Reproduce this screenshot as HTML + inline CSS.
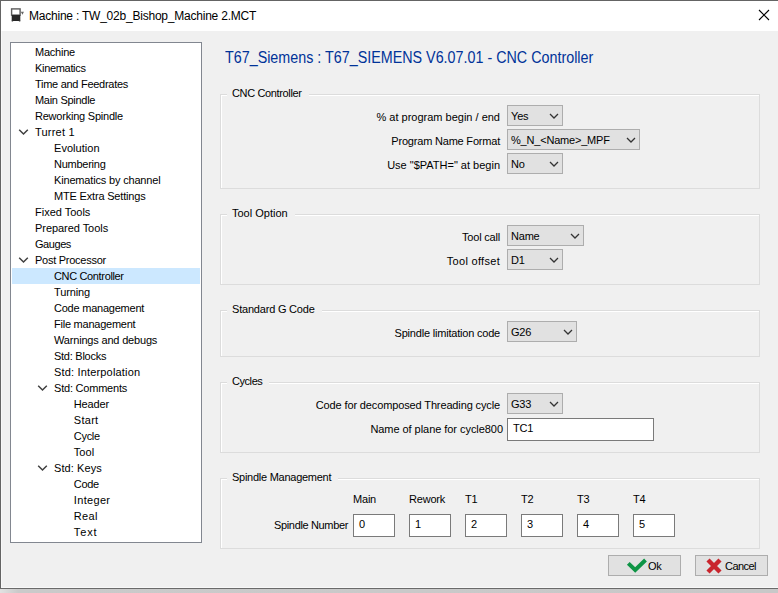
<!DOCTYPE html>
<html><head><meta charset="utf-8">
<style>
html,body{margin:0;padding:0;width:778px;height:593px;overflow:hidden;background:#f0f0f0;}
*{box-sizing:border-box;}
body{font-family:"Liberation Sans",sans-serif;font-size:11px;color:#000;position:relative;letter-spacing:-0.2px;}
div,svg{position:absolute;}
.t{white-space:nowrap;line-height:16px;height:16px;}
.grp{left:220px;width:540px;border:1px solid #dcdcdc;box-shadow:inset 1px 1px 0 #fff;}
.gl{background:#f0f0f0;white-space:nowrap;line-height:14px;height:14px;padding:0 7px 0 5px;}
.cb{left:507px;height:21px;background:#e1e1e1;border:1px solid #adadad;line-height:21px;padding-left:3px;white-space:nowrap;}
.tb{height:23px;width:42px;background:#fff;border:1px solid #7a7a7a;line-height:19px;padding-left:5px;white-space:nowrap;}
.lbl{white-space:nowrap;line-height:16px;height:16px;text-align:right;}
.btn{top:555px;width:73px;height:21px;background:#e1e1e1;border:1px solid #adadad;}
</style></head><body>
<!-- window frame -->
<div style="left:0;top:0;width:778px;height:31px;background:#fff"></div>
<div style="left:0;top:0;width:778px;height:1px;background:#646464"></div>
<div style="left:0;top:0;width:1px;height:589px;background:#646464"></div>
<div style="left:1px;top:31px;width:1px;height:557px;background:#f8f8f8"></div>
<div style="left:1px;top:587px;width:777px;height:1px;background:#f8f8f8"></div>
<div style="left:0;top:588px;width:778px;height:1px;background:#6a6a6a"></div>
<div style="left:0;top:589px;width:778px;height:4px;background:linear-gradient(to right,#e2e2e2,#cacaca 18px,#c8c8c8)"></div>

<!-- title bar -->
<svg style="left:8px;top:5px" width="20" height="20" viewBox="0 0 20 20">
  <rect x="3.6" y="3.9" width="8.5" height="6.2" fill="#fff" stroke="#5c5c5c" stroke-width="1.4"/>
  <rect x="3.7" y="10" width="8.6" height="6" fill="#262626"/>
  <rect x="3.7" y="15.5" width="1.4" height="1" fill="#444"/>
  <rect x="10.9" y="15.5" width="1.4" height="1" fill="#444"/>
  <path d="M12.8 6.8 L15.9 6.8 L14.5 9.8 Z" fill="#666"/>
</svg>
<div class="t" style="left:29px;top:8px;font-size:12px;letter-spacing:-0.22px">Machine : TW_02b_Bishop_Machine 2.MCT</div>
<svg style="left:758px;top:9px" width="14" height="13" viewBox="0 0 14 13">
  <path d="M1 1 L11 11 M11 1 L1 11" stroke="#000" stroke-width="1.1" fill="none"/>
</svg>

<!-- tree -->
<div style="left:10px;top:42px;width:192px;height:501px;background:#fff;border:1px solid #828790"></div>
<div style="left:12px;top:268px;width:188px;height:16px;background:#cce8ff"></div>
<div class="t" style="left:35px;top:44px;letter-spacing:-0.23px">Machine</div>
<div class="t" style="left:35px;top:60px;letter-spacing:-0.32px">Kinematics</div>
<div class="t" style="left:35px;top:76px;letter-spacing:-0.28px">Time and Feedrates</div>
<div class="t" style="left:35px;top:92px;letter-spacing:-0.29px">Main Spindle</div>
<div class="t" style="left:35px;top:108px;letter-spacing:-0.22px">Reworking Spindle</div>
<div class="t" style="left:35px;top:124px;letter-spacing:0.21px">Turret 1</div>
<svg style="left:18px;top:128px" width="11" height="8" viewBox="0 0 11 8"><path d="M1.2 1.8 L5.5 6 L9.8 1.8" stroke="#404040" stroke-width="1.5" fill="none"/></svg>
<div class="t" style="left:54px;top:140px;letter-spacing:0.04px">Evolution</div>
<div class="t" style="left:54px;top:156px;letter-spacing:-0.25px">Numbering</div>
<div class="t" style="left:54px;top:172px;letter-spacing:-0.17px">Kinematics by channel</div>
<div class="t" style="left:54px;top:188px;letter-spacing:-0.18px">MTE Extra Settings</div>
<div class="t" style="left:35px;top:204px;letter-spacing:-0.01px">Fixed Tools</div>
<div class="t" style="left:35px;top:220px;letter-spacing:-0.05px">Prepared Tools</div>
<div class="t" style="left:35px;top:236px;letter-spacing:-0.44px">Gauges</div>
<div class="t" style="left:35px;top:252px;letter-spacing:-0.26px">Post Processor</div>
<svg style="left:18px;top:256px" width="11" height="8" viewBox="0 0 11 8"><path d="M1.2 1.8 L5.5 6 L9.8 1.8" stroke="#404040" stroke-width="1.5" fill="none"/></svg>
<div class="t" style="left:54px;top:268px;letter-spacing:-0.35px">CNC Controller</div>
<div class="t" style="left:54px;top:284px;letter-spacing:-0.13px">Turning</div>
<div class="t" style="left:54px;top:300px;letter-spacing:-0.23px">Code management</div>
<div class="t" style="left:54px;top:316px;letter-spacing:-0.24px">File management</div>
<div class="t" style="left:54px;top:332px;letter-spacing:-0.18px">Warnings and debugs</div>
<div class="t" style="left:54px;top:348px;letter-spacing:-0.26px">Std: Blocks</div>
<div class="t" style="left:54px;top:364px;letter-spacing:0.17px">Std: Interpolation</div>
<div class="t" style="left:54px;top:380px;letter-spacing:-0.21px">Std: Comments</div>
<svg style="left:37px;top:384px" width="11" height="8" viewBox="0 0 11 8"><path d="M1.2 1.8 L5.5 6 L9.8 1.8" stroke="#404040" stroke-width="1.5" fill="none"/></svg>
<div class="t" style="left:73.8px;top:396px;letter-spacing:-0.16px">Header</div>
<div class="t" style="left:73.8px;top:412px;letter-spacing:0.28px">Start</div>
<div class="t" style="left:73.8px;top:428px;letter-spacing:-0.30px">Cycle</div>
<div class="t" style="left:73.8px;top:444px;letter-spacing:0.07px">Tool</div>
<div class="t" style="left:54px;top:460px;letter-spacing:0.08px">Std: Keys</div>
<svg style="left:37px;top:464px" width="11" height="8" viewBox="0 0 11 8"><path d="M1.2 1.8 L5.5 6 L9.8 1.8" stroke="#404040" stroke-width="1.5" fill="none"/></svg>
<div class="t" style="left:73.8px;top:476px;letter-spacing:-0.33px">Code</div>
<div class="t" style="left:73.8px;top:492px;letter-spacing:0.33px">Integer</div>
<div class="t" style="left:73.8px;top:508px;letter-spacing:0.30px">Real</div>
<div class="t" style="left:73.8px;top:524px;letter-spacing:0.87px">Text</div>

<!-- heading -->
<div class="t" style="left:225px;top:48px;font-size:16px;height:20px;line-height:20px;color:#003399;letter-spacing:0;transform-origin:0 0;transform:scaleX(0.895)">T67_Siemens : T67_SIEMENS V6.07.01 - CNC Controller</div>

<!-- group 1 -->
<div class="grp" style="top:94px;height:95px"></div>
<div class="gl" style="left:227px;top:86px;letter-spacing:-0.36px">CNC Controller</div>
<div class="lbl" style="right:278px;top:109px;letter-spacing:0">% at program begin / end</div>
<div class="cb" style="top:105px;width:56px">Yes</div>
<svg style="left:549px;top:112px" width="11" height="8" viewBox="0 0 11 8"><path d="M1 2 L5 6 L9 2" stroke="#333" stroke-width="1.25" fill="none"/></svg>
<div class="lbl" style="right:278px;top:133px">Program Name Format</div>
<div class="cb" style="top:129px;width:133px">%_N_&lt;Name&gt;_MPF</div>
<svg style="left:626px;top:136px" width="11" height="8" viewBox="0 0 11 8"><path d="M1 2 L5 6 L9 2" stroke="#333" stroke-width="1.25" fill="none"/></svg>
<div class="lbl" style="right:278px;top:157px;letter-spacing:0">Use "$PATH=" at begin</div>
<div class="cb" style="top:153px;width:56px">No</div>
<svg style="left:549px;top:160px" width="11" height="8" viewBox="0 0 11 8"><path d="M1 2 L5 6 L9 2" stroke="#333" stroke-width="1.25" fill="none"/></svg>

<!-- group 2 -->
<div class="grp" style="top:214px;height:71px"></div>
<div class="gl" style="left:227px;top:206px;letter-spacing:0px">Tool Option</div>
<div class="lbl" style="right:278px;top:229px">Tool call</div>
<div class="cb" style="top:225px;width:77px">Name</div>
<svg style="left:570px;top:232px" width="11" height="8" viewBox="0 0 11 8"><path d="M1 2 L5 6 L9 2" stroke="#333" stroke-width="1.25" fill="none"/></svg>
<div class="lbl" style="right:278px;top:253px;letter-spacing:0.3px">Tool offset</div>
<div class="cb" style="top:249px;width:56px">D1</div>
<svg style="left:549px;top:256px" width="11" height="8" viewBox="0 0 11 8"><path d="M1 2 L5 6 L9 2" stroke="#333" stroke-width="1.25" fill="none"/></svg>

<!-- group 3 -->
<div class="grp" style="top:310px;height:47px"></div>
<div class="gl" style="left:227px;top:302px">Standard G Code</div>
<div class="lbl" style="right:278px;top:325px">Spindle limitation code</div>
<div class="cb" style="top:321px;width:70px">G26</div>
<svg style="left:563px;top:328px" width="11" height="8" viewBox="0 0 11 8"><path d="M1 2 L5 6 L9 2" stroke="#333" stroke-width="1.25" fill="none"/></svg>

<!-- group 4 -->
<div class="grp" style="top:382px;height:71px"></div>
<div class="gl" style="left:227px;top:374px;letter-spacing:-0.44px">Cycles</div>
<div class="lbl" style="right:278px;top:397px;letter-spacing:-0.13px">Code for decomposed Threading cycle</div>
<div class="cb" style="top:393px;width:56px">G33</div>
<svg style="left:549px;top:400px" width="11" height="8" viewBox="0 0 11 8"><path d="M1 2 L5 6 L9 2" stroke="#333" stroke-width="1.25" fill="none"/></svg>
<div class="lbl" style="right:275px;top:421px;letter-spacing:-0.05px">Name of plane for cycle800</div>
<div class="tb" style="left:507px;top:418px;width:147px">TC1</div>

<!-- group 5 -->
<div class="grp" style="top:478px;height:71px"></div>
<div class="gl" style="left:227px;top:470px;letter-spacing:-0.26px">Spindle Management</div>
<div class="t" style="left:353px;top:491px">Main</div>
<div class="t" style="left:409px;top:491px">Rework</div>
<div class="t" style="left:465px;top:491px">T1</div>
<div class="t" style="left:521px;top:491px">T2</div>
<div class="t" style="left:577px;top:491px">T3</div>
<div class="t" style="left:633px;top:491px">T4</div>
<div class="lbl" style="right:430px;top:517px;letter-spacing:-0.35px">Spindle Number</div>
<div class="tb" style="left:353px;top:514px">0</div>
<div class="tb" style="left:409px;top:514px">1</div>
<div class="tb" style="left:465px;top:514px">2</div>
<div class="tb" style="left:521px;top:514px">3</div>
<div class="tb" style="left:577px;top:514px">4</div>
<div class="tb" style="left:633px;top:514px">5</div>

<!-- buttons -->
<div class="btn" style="left:608px"></div>
<svg style="left:626px;top:558px" width="22" height="16" viewBox="0 0 22 16">
  <path d="M2.3 5.4 L9.2 11.9 L19.5 2" stroke="#0e9445" stroke-width="4" fill="none" stroke-linejoin="miter"/>
</svg>
<div class="t" style="left:648px;top:558px">Ok</div>
<div class="btn" style="left:695px"></div>
<svg style="left:705px;top:557px" width="18" height="18" viewBox="0 0 18 18">
  <path d="M3 3 L15 15 M15 3 L3 15" stroke="#c9252d" stroke-width="4.4" fill="none"/>
</svg>
<div class="t" style="left:725px;top:558px;letter-spacing:-0.55px">Cancel</div>
</body></html>
